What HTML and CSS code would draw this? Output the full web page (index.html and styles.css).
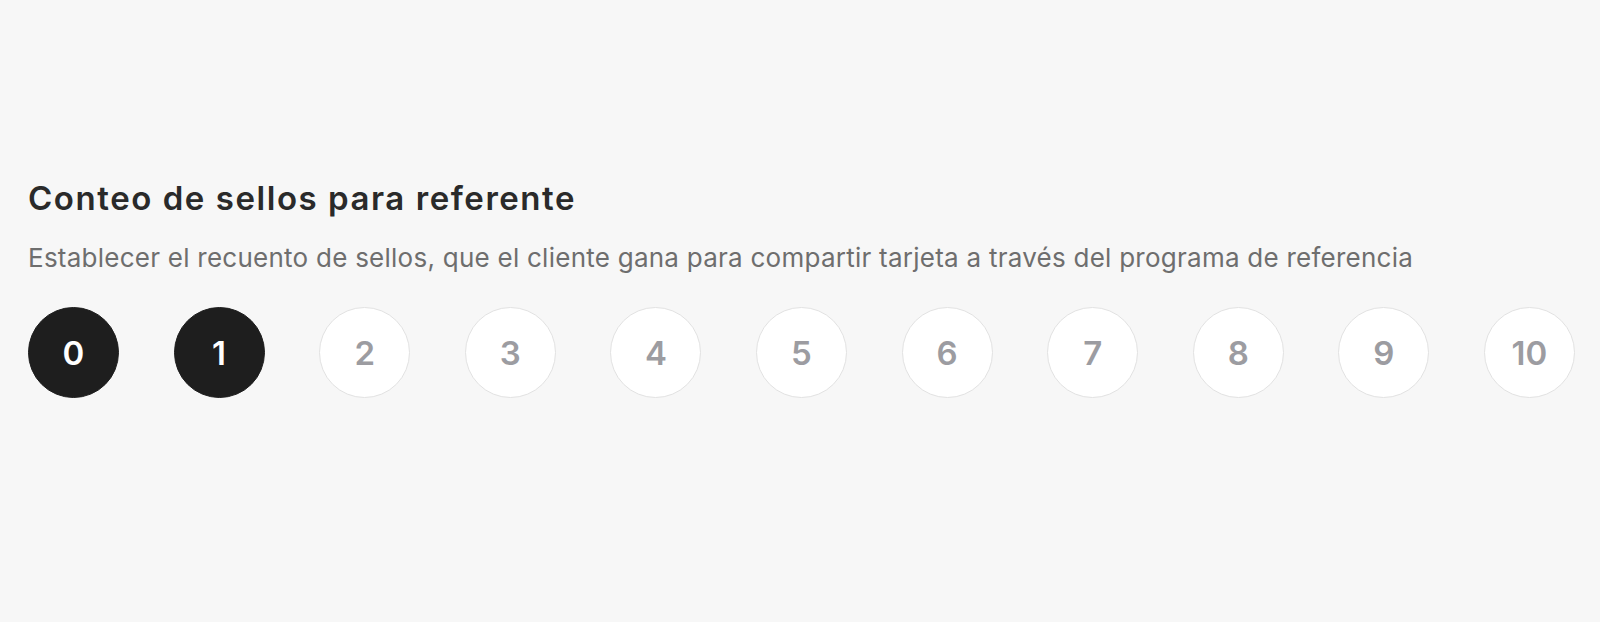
FILE: index.html
```html
<!DOCTYPE html>
<html lang="es">
<head>
<meta charset="utf-8">
<title>Conteo de sellos para referente</title>
<link rel="stylesheet" href="styles.css">
</head>
<body>
<main class="page">
  <section class="setting">
    <h2 class="title">Conteo de sellos para referente</h2>
    <p class="desc">Establecer el recuento de sellos, que el cliente gana para compartir tarjeta a través del programa de referencia</p>
    <div class="counts">
      <button class="count active">0</button>
      <button class="count active">1</button>
      <button class="count">2</button>
      <button class="count">3</button>
      <button class="count">4</button>
      <button class="count">5</button>
      <button class="count">6</button>
      <button class="count">7</button>
      <button class="count">8</button>
      <button class="count">9</button>
      <button class="count">10</button>
    </div>
  </section>
</main>
</body>
</html>
```

FILE: styles.css
```css
html, body {
  margin: 0;
  padding: 0;
  background: #f7f7f7;
}
body {
  font-family: Inter, "Noto Sans", "Liberation Sans", sans-serif;
  height: 622px;
  overflow: hidden;
}
.page {
  padding: 178px 25px 0 28px;
}
.title {
  margin: 0;
  font-size: 33px;
  line-height: 40px;
  font-weight: 600;
  color: #2a2a2a;
  letter-spacing: 1.55px;
}
.desc {
  margin: 24px 0 0;
  font-size: 26px;
  line-height: 32px;
  font-weight: 400;
  color: #6e6e6e;
  letter-spacing: 0.25px;
}
.counts {
  margin-top: 33px;
  display: flex;
  justify-content: space-between;
}
.count {
  width: 91px;
  height: 91px;
  box-sizing: border-box;
  border-radius: 50%;
  border: 1px solid #e2e2e2;
  background: #ffffff;
  color: #9c9ca1;
  font-family: inherit;
  font-size: 33px;
  font-weight: 600;
  padding: 0;
  display: flex;
  align-items: center;
  justify-content: center;
}
.count.active {
  background: #1e1e1e;
  border-color: #1e1e1e;
  color: #ffffff;
}
```
